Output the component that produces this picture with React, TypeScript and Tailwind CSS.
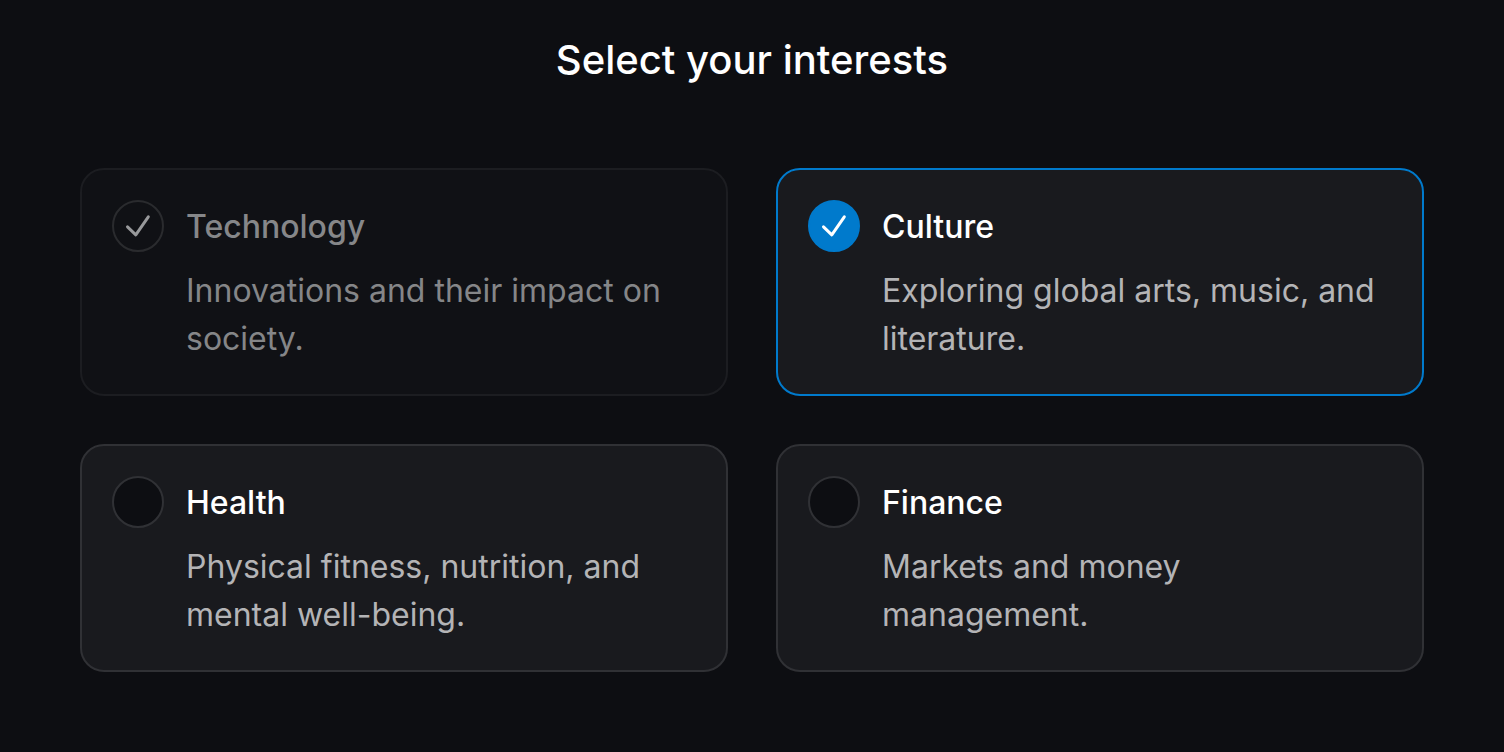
const interests = [
  { id: "technology", title: "Technology", text: "Innovations and their impact on society.", checked: true, disabled: true },
  { id: "culture", title: "Culture", text: "Exploring global arts, music, and literature.", checked: true, disabled: false },
  { id: "health", title: "Health", text: "Physical fitness, nutrition, and mental well-being.", checked: false, disabled: false },
  { id: "finance", title: "Finance", text: "Markets and money management.", checked: false, disabled: false },
];

export default function App() {
  return (
    <main className="min-h-screen bg-[#0d0e12] px-20 pt-8 pb-20 font-['Inter',sans-serif] text-white">
      <fieldset>
        <legend className="mx-auto text-[40px] leading-14 font-medium">Select your interests</legend>
        <div className="mt-20 grid grid-cols-2 gap-12">
          {interests.map((item) => (
            <label
              key={item.id}
              htmlFor={item.id}
              className="flex items-start gap-[22px] rounded-3xl border-2 border-[#303135] bg-[#191a1e] px-[30px] pt-[30px] pb-[31px] has-checked:border-[#007acc] has-disabled:border-[#1c1d21] has-disabled:bg-[#101115]"
            >
              <span className="grid size-13 shrink-0">
                <input
                  id={item.id}
                  type="checkbox"
                  defaultChecked={item.checked}
                  disabled={item.disabled}
                  aria-describedby={item.id + "-text"}
                  className="peer col-start-1 row-start-1 size-13 appearance-none rounded-full border-2 border-[#303135] bg-[#0d0e12] checked:border-[#007acc] checked:bg-[#007acc] disabled:border-[#2a2b2e] disabled:bg-[#101115]"
                />
                <svg
                  viewBox="0 0 52 52"
                  fill="none"
                  stroke="currentColor"
                  strokeWidth="3"
                  strokeLinecap="round"
                  strokeLinejoin="round"
                  aria-hidden="true"
                  className="pointer-events-none col-start-1 row-start-1 hidden size-13 peer-checked:block peer-disabled:text-[#98999b]"
                >
                  <path d="M15.5 26.8L23.8 34.8L36.3 16.8" />
                </svg>
              </span>
              <span className="flex flex-col gap-4 pt-[3px]">
                <span className={item.disabled ? "text-[32px] leading-12 font-medium text-[#868789]" : "text-[32px] leading-12 font-medium"}>
                  {item.title}
                </span>
                <span
                  id={item.id + "-text"}
                  className={item.disabled ? "text-[32px] leading-12 text-[#858688]" : "text-[32px] leading-12 text-[#b4b4b6]"}
                >
                  {item.text}
                </span>
              </span>
            </label>
          ))}
        </div>
      </fieldset>
    </main>
  );
}
